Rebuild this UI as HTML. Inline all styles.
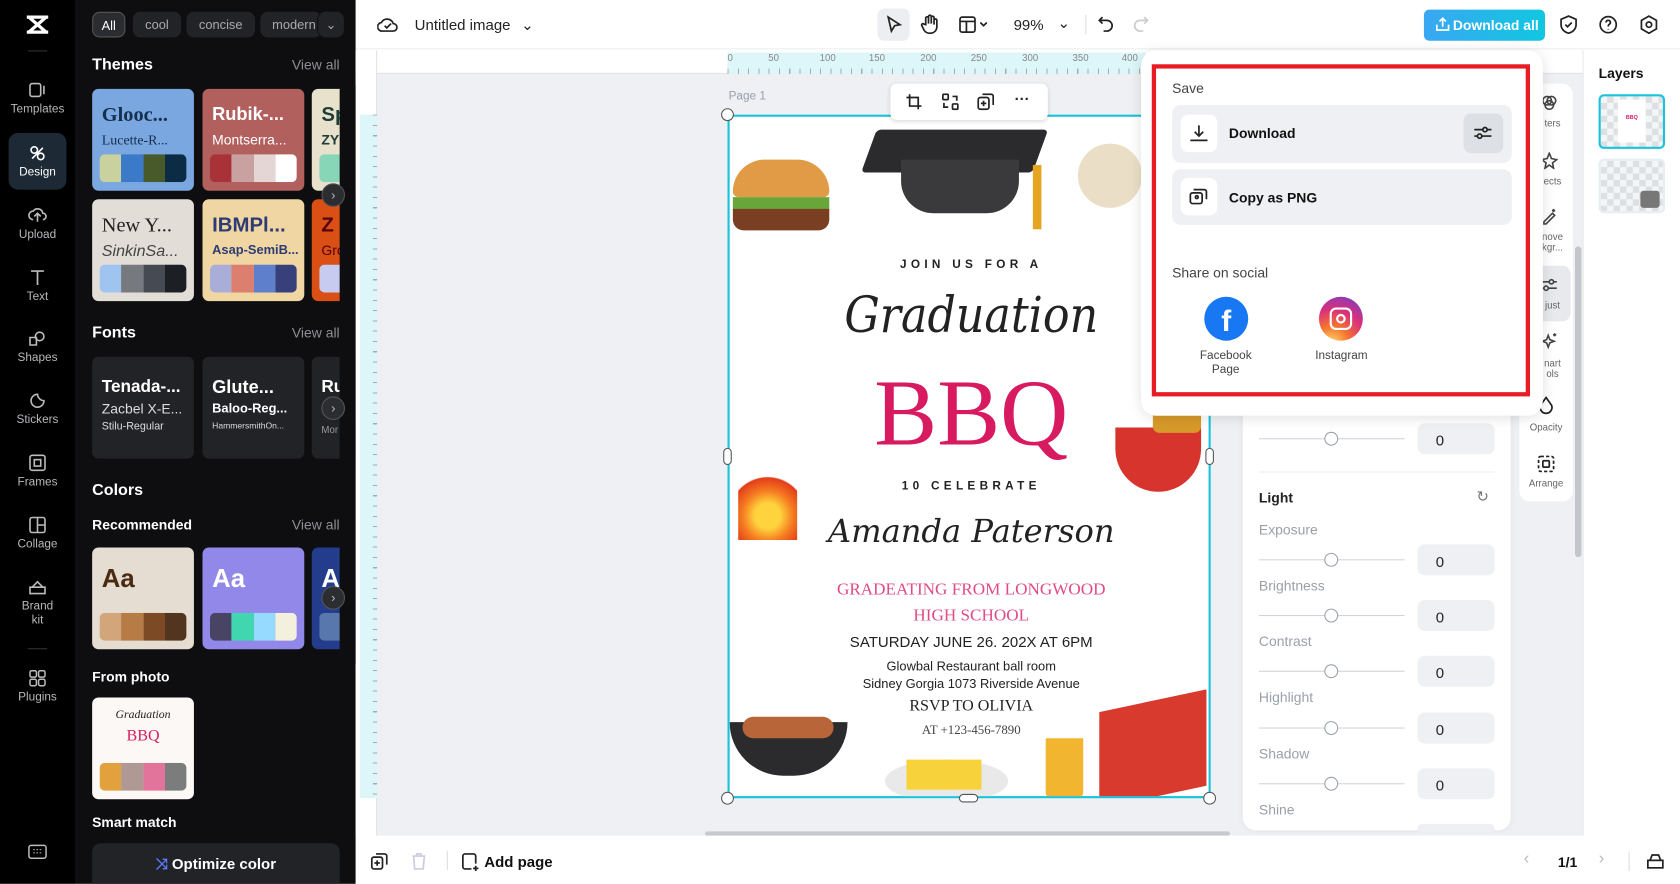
<!DOCTYPE html>
<html><head><meta charset="utf-8"><style>
*{box-sizing:border-box;margin:0;padding:0}
html,body{width:1680px;height:884px;overflow:hidden;background:#fff;font-family:"Liberation Sans","DejaVu Sans",sans-serif}
#w{position:absolute;left:0;top:0;width:1568px;height:825px;transform:scale(1.0714286);transform-origin:0 0;overflow:hidden}
.a{position:absolute}
.nav{left:0;top:0;width:70px;height:825px;background:#000}
.ni{position:absolute;left:0;width:70px;text-align:center;color:#b8b8bc;font-size:11px}
.ni svg{display:block;margin:0 auto 3px}
.pan{left:70px;top:0;width:262px;height:825px;background:#0e0e10;color:#fff;overflow:hidden}
.chip{position:absolute;top:11px;height:24px;border-radius:7px;background:#222327;color:#aaa;font-size:12px;line-height:24px;text-align:center}
.h{position:absolute;font-weight:bold;font-size:15px;color:#fff}
.va{position:absolute;right:15px;font-size:13px;color:#8e8e94}
.card{position:absolute;width:95px;height:95px;border-radius:6px;overflow:hidden}
.sw{position:absolute;left:7px;bottom:8px;width:81px;height:26px;border-radius:5px;overflow:hidden;display:flex}
.sw i{flex:1}
.t1{position:absolute;left:9px;top:14px;font-size:19px;font-weight:bold;white-space:nowrap}
.t2{position:absolute;left:9px;top:40px;font-size:13px;white-space:nowrap}
.fc{background:#222327}
.arr{position:absolute;left:230px;width:22px;height:22px;border-radius:50%;background:#2b2d31;border:1px solid #555;color:#bbb;font-size:12px;text-align:center;line-height:20px;z-index:3}
.top{left:332px;top:0;width:1236px;height:46px;background:#fff;border-bottom:1px solid #eceef1}
.ico{position:absolute;stroke:#222;fill:none;stroke-width:1.6}
.sl{position:absolute;left:15px;width:136px;height:1px;background:#d0d4da}
.sl:after{content:"";position:absolute;left:61px;top:-6px;width:11px;height:11px;border-radius:50%;border:1px solid #9aa0a8;background:#fff}
.inp{position:absolute;left:163px;width:72px;height:29px;border-radius:7px;background:#eef0f3;font-size:14px;color:#222;padding:8px 0 0 17px}
.lab{position:absolute;left:15px;font-size:13px;color:#9aa0a8}
.tl{position:absolute;left:0;width:50px;text-align:center;font-size:9px;color:#666}
.ti{position:absolute;left:17px;stroke:#444;fill:none;stroke-width:1.5}
</style></head><body><div id="w">

<!-- left nav -->
<div class="a nav">
 <svg class="a" style="left:22px;top:12px" width="26" height="22" viewBox="0 0 26 22"><path d="M3 4h20M3 18h20M5 4l16 14M21 4L5 18" stroke="#fff" stroke-width="3" fill="none"/></svg>
 <div class="a" style="left:26px;top:47px;width:18px;height:1px;background:#333"></div>
 <div class="ni" style="top:75px"><svg width="18" height="18" viewBox="0 0 18 18"><rect x="2" y="3" width="10" height="12" rx="2" stroke="#bbb" fill="none" stroke-width="1.5"/><path d="M15 5v8" stroke="#bbb" stroke-width="1.5"/></svg>Templates</div>
 <div class="a" style="left:8px;top:124px;width:54px;height:53px;border-radius:9px;background:#1d2a36"></div>
 <div class="ni" style="top:134px;color:#fff"><svg width="18" height="18" viewBox="0 0 18 18"><circle cx="6" cy="6" r="3" stroke="#fff" fill="none" stroke-width="1.5"/><circle cx="12" cy="12" r="3" stroke="#fff" fill="none" stroke-width="1.5"/><path d="M4 14L14 4" stroke="#fff" stroke-width="1.5"/></svg>Design</div>
 <div class="ni" style="top:192px"><svg width="18" height="18" viewBox="0 0 18 18"><path d="M5 13a4 4 0 0 1 0-8 5 5 0 0 1 9 2 3 3 0 0 1 0 6M9 15V8M6 10l3-3 3 3" stroke="#bbb" fill="none" stroke-width="1.5"/></svg>Upload</div>
 <div class="ni" style="top:250px"><svg width="18" height="18" viewBox="0 0 18 18"><path d="M3 3h12M9 3v13" stroke="#bbb" stroke-width="1.6"/></svg>Text</div>
 <div class="ni" style="top:307px"><svg width="18" height="18" viewBox="0 0 18 18"><circle cx="11" cy="7" r="4" stroke="#bbb" fill="none" stroke-width="1.5"/><path d="M2 8h6v7H2z" stroke="#bbb" fill="none" stroke-width="1.5"/></svg>Shapes</div>
 <div class="ni" style="top:365px"><svg width="18" height="18" viewBox="0 0 18 18"><path d="M15 9A6 6 0 1 1 9 3c0 3 3 6 6 6z" stroke="#bbb" fill="none" stroke-width="1.5"/></svg>Stickers</div>
 <div class="ni" style="top:423px"><svg width="18" height="18" viewBox="0 0 18 18"><rect x="2" y="2" width="14" height="14" rx="2" stroke="#bbb" fill="none" stroke-width="1.5"/><rect x="6" y="6" width="6" height="6" stroke="#bbb" fill="none" stroke-width="1.5"/></svg>Frames</div>
 <div class="ni" style="top:481px"><svg width="18" height="18" viewBox="0 0 18 18"><rect x="2" y="2" width="14" height="14" rx="2" stroke="#bbb" fill="none" stroke-width="1.5"/><path d="M9 2v14M9 9h7" stroke="#bbb" stroke-width="1.5"/></svg>Collage</div>
 <div class="ni" style="top:539px;line-height:13px"><svg width="18" height="18" viewBox="0 0 18 18"><path d="M2 9h14v6H2zM4 9l5-5 5 5" stroke="#bbb" fill="none" stroke-width="1.5"/></svg>Brand<br>kit</div>
 <div class="a" style="left:26px;top:605px;width:18px;height:1px;background:#333"></div>
 <div class="ni" style="top:624px"><svg width="18" height="18" viewBox="0 0 18 18"><rect x="2" y="2" width="6" height="6" rx="1.5" stroke="#bbb" fill="none" stroke-width="1.4"/><rect x="10" y="2" width="6" height="6" rx="1.5" stroke="#bbb" fill="none" stroke-width="1.4"/><rect x="2" y="10" width="6" height="6" rx="1.5" stroke="#bbb" fill="none" stroke-width="1.4"/><rect x="10" y="10" width="6" height="6" rx="1.5" stroke="#bbb" fill="none" stroke-width="1.4"/></svg>Plugins</div>
 <svg class="a" style="left:26px;top:788px" width="18" height="14" viewBox="0 0 18 14"><rect x="1" y="1" width="16" height="12" rx="2" stroke="#bbb" fill="none" stroke-width="1.4"/><path d="M5 5h8M5 8h8" stroke="#bbb" stroke-dasharray="1.5 1.5"/></svg>
</div>

<!-- panel -->
<div class="a pan">
 <div class="chip" style="left:16px;width:31px;background:#2a2c30;border:1px solid #555;color:#fff">All</div>
 <div class="chip" style="left:54px;width:45px">cool</div>
 <div class="chip" style="left:104px;width:64px">concise</div>
 <div class="chip" style="left:173px;width:57px;text-align:left;padding-left:11px;overflow:hidden">modern</div>
 <div class="chip" style="left:226px;width:21px;background:#0e0e10"></div>
 <div class="chip" style="left:227px;width:24px">⌄</div>
 <div class="h" style="left:16px;top:52px">Themes</div><div class="va" style="top:53px">View all</div>
 <div class="card" style="left:16px;top:83px;background:#7aa7e0"><div class="t1" style="font-family:'Liberation Serif',serif;color:#15304e">Glooc...</div><div class="t2" style="font-family:'Liberation Serif',serif;color:#15304e">Lucette-R...</div><div class="sw"><i style="background:#c9d29f"></i><i style="background:#3a7ac9"></i><i style="background:#48592a"></i><i style="background:#0c2b45"></i></div></div>
 <div class="card" style="left:119px;top:83px;background:#b2605e"><div class="t1" style="color:#fff;font-size:17px">Rubik-...</div><div class="t2" style="color:#fff">Montserra...</div><div class="sw"><i style="background:#a83237"></i><i style="background:#c9a1a1"></i><i style="background:#e4d6d4"></i><i style="background:#fff"></i></div></div>
 <div class="card" style="left:221px;top:83px;background:#e8e2cc"><div class="t1" style="color:#1d3d36">Sp</div><div class="t2" style="color:#1d3d36;font-weight:bold">ZY</div><div class="sw"><i style="background:#86d6b7"></i></div></div>
 <div class="card" style="left:16px;top:186px;background:#e3ddd7"><div class="t1" style="font-family:'Liberation Serif',serif;color:#222;font-weight:normal">New Y...</div><div class="t2" style="color:#444;font-style:italic;font-size:15px">SinkinSa...</div><div class="sw"><i style="background:#a0c4f0"></i><i style="background:#767a7f"></i><i style="background:#464a52"></i><i style="background:#1c1f24"></i></div></div>
 <div class="card" style="left:119px;top:186px;background:#efd6a3"><div class="t1" style="color:#2f3c73">IBMPl...</div><div class="t2" style="color:#2f3c73;font-weight:bold;font-size:12px">Asap-SemiB...</div><div class="sw"><i style="background:#a9aed8"></i><i style="background:#dd7f6f"></i><i style="background:#5e7fcc"></i><i style="background:#38407c"></i></div></div>
 <div class="card" style="left:221px;top:186px;background:#d94f14"><div class="t1" style="color:#501">Z</div><div class="t2" style="color:#501">Gro</div><div class="sw"><i style="background:#c7cbf0"></i></div></div>
 <div class="arr" style="top:171px">›</div>
 <div class="h" style="left:16px;top:302px">Fonts</div><div class="va" style="top:303px">View all</div>
 <div class="card fc" style="left:16px;top:333px"><div class="t1" style="color:#fff;font-size:16px;top:20px">Tenada-...</div><div class="t2" style="color:#ddd;top:41px">Zacbel X-E...</div><div class="t2" style="color:#ddd;top:60px;font-size:10px">Stilu-Regular</div></div>
 <div class="card fc" style="left:119px;top:333px"><div class="t1" style="color:#fff;font-size:17px;top:19px">Glute...</div><div class="t2" style="color:#fff;top:41px;font-weight:bold;font-size:12px">Baloo-Reg...</div><div class="t2" style="color:#ddd;top:60px;font-size:8px">HammersmithOn...</div></div>
 <div class="card fc" style="left:221px;top:333px"><div class="t1" style="color:#fff;font-size:16px;top:20px">Ru</div><div class="t2" style="color:#999;top:63px;font-size:9px">Mor</div></div>
 <div class="arr" style="top:370px">›</div>
 <div class="h" style="left:16px;top:449px">Colors</div>
 <div class="a" style="left:16px;top:482px;font-size:13px;font-weight:bold">Recommended</div><div class="va" style="top:482px">View all</div>
 <div class="card" style="left:16px;top:511px;background:#e5dcd2"><div class="t1" style="color:#4a2b12;font-size:24px;top:16px">Aa</div><div class="sw"><i style="background:#d2a67a"></i><i style="background:#b77c45"></i><i style="background:#7c4a25"></i><i style="background:#53341e"></i></div></div>
 <div class="card" style="left:119px;top:511px;background:#9288e9"><div class="t1" style="color:#fff;font-size:24px;top:16px">Aa</div><div class="sw"><i style="background:#4a4464"></i><i style="background:#3fd6b0"></i><i style="background:#96daff"></i><i style="background:#f4f0de"></i></div></div>
 <div class="card" style="left:221px;top:511px;background:#233c8c"><div class="t1" style="color:#fff;font-size:24px;top:16px">A</div><div class="sw"><i style="background:#5777ad"></i></div></div>
 <div class="arr" style="top:547px">›</div>
 <div class="a" style="left:247px;top:80px;width:15px;height:540px;background:#0e0e10;z-index:2"></div>
 <div class="a" style="left:16px;top:624px;font-size:13px;font-weight:bold">From photo</div>
 <div class="card" style="left:16px;top:651px;background:#fbf8f6"><div class="a" style="left:0;width:95px;top:10px;text-align:center;font-family:'Liberation Serif',serif;font-style:italic;font-size:11px;color:#222">Graduation</div><div class="a" style="left:0;width:95px;top:28px;text-align:center;font-family:'Liberation Serif',serif;font-size:15px;color:#d51e63">BBQ</div><div class="sw"><i style="background:#e3a13e"></i><i style="background:#b09995"></i><i style="background:#e2739a"></i><i style="background:#7b7d7c"></i></div></div>
 <div class="a" style="left:16px;top:760px;font-size:13px;font-weight:bold">Smart match</div>
 <div class="a" style="left:16px;top:787px;width:231px;height:45px;border-radius:8px;background:#222327;text-align:center;line-height:38px;font-size:14px;font-weight:bold"><span style="color:#5b7cff">⤨</span> Optimize color</div>
</div>
<div class="a" style="left:332px;top:390px;width:6px;height:46px;background:#222;border-radius:0 6px 6px 0"></div>

<!-- top bar -->
<div class="a top">
 <svg class="ico" style="left:20px;top:14px" width="20" height="18" viewBox="0 0 20 18"><path d="M5 15a4 4 0 0 1-1-8 6 6 0 0 1 11 1 3.5 3.5 0 0 1 0 7zM7 10l2 2 4-4"/></svg>
 <div class="a" style="left:55px;top:15px;font-size:14px;color:#222">Untitled image <span style="margin-left:6px">⌄</span></div>
 <div class="a" style="left:487px;top:8px;width:30px;height:30px;border-radius:6px;background:#eceef1"></div>
 <svg class="ico" style="left:494px;top:14px" width="16" height="18" viewBox="0 0 16 18"><path d="M3 2l11 7-5 1-3 5z"/></svg>
 <svg class="ico" style="left:527px;top:13px" width="18" height="19" viewBox="0 0 18 19"><path d="M5 10V4a1.3 1.3 0 0 1 2.6 0v5V2.5a1.3 1.3 0 0 1 2.6 0V9V3.5a1.3 1.3 0 0 1 2.6 0V10V6a1.3 1.3 0 0 1 2.6 0v6a6 6 0 0 1-6 6h-1a6 6 0 0 1-5-3l-2-4a1.2 1.2 0 0 1 2-1.4z"/></svg>
 <svg class="ico" style="left:563px;top:14px" width="28" height="18" viewBox="0 0 28 18"><rect x="1" y="2" width="14" height="14" rx="2"/><path d="M1 6h14M7 6v10M20 7l3 3 3-3"/></svg>
 <div class="a" style="left:614px;top:15px;font-size:14px;color:#222">99%</div>
 <div class="a" style="left:655px;top:13px;font-size:14px;color:#222">⌄</div>
 <div class="a" style="left:681px;top:14px;width:1px;height:18px;background:#ddd"></div>
 <svg class="ico" style="left:692px;top:14px" width="16" height="16" viewBox="0 0 16 16"><path d="M5 2L2 5l3 3M2 5h7a5 5 0 0 1 0 10H6"/></svg>
 <svg class="ico" style="left:725px;top:14px;stroke:#ccc" width="16" height="16" viewBox="0 0 16 16"><path d="M11 2l3 3-3 3M14 5H7a5 5 0 0 0 0 10h3"/></svg>
 <div class="a" style="left:997px;top:9px;width:113px;height:29px;border-radius:5px;background:linear-gradient(90deg,#3aa7f2,#10c7e0);color:#fff;font-size:13px;font-weight:bold;line-height:29px;padding-left:27px">Download all</div>
 <svg class="ico" style="left:1008px;top:16px;stroke:#fff" width="13" height="13" viewBox="0 0 13 13"><path d="M1 7v5h11V7M6.5 9V1M3.5 4l3-3 3 3"/></svg>
 <svg class="ico" style="left:1123px;top:14px" width="18" height="18" viewBox="0 0 18 18"><path d="M9 1l7 3v5c0 4-3 7-7 8-4-1-7-4-7-8V4zM6 9l2 2 4-4"/></svg>
 <svg class="ico" style="left:1160px;top:14px" width="18" height="18" viewBox="0 0 18 18"><circle cx="9" cy="9" r="7.5"/><path d="M7 7a2 2 0 1 1 3 1.7c-.8.5-1 1-1 2M9 13v.5"/></svg>
 <svg class="ico" style="left:1198px;top:14px" width="18" height="18" viewBox="0 0 18 18"><path d="M9 1l7 4v8l-7 4-7-4V5z"/><circle cx="9" cy="9" r="2.5"/></svg>
</div>

<!-- rulers & canvas -->
<div class="a" style="left:332px;top:47px;width:1146px;height:733px;background:#eef0f3"></div>
<div class="a" style="left:332px;top:47px;width:1146px;height:22px;background:#fff;border-bottom:1px solid #e0e3e7"></div>
<div class="a" style="left:332px;top:47px;width:20px;height:733px;background:#fff;border-right:1px solid #e0e3e7"></div>
<div class="a" style="left:679px;top:49px;width:390px;height:20px;background:#dcf6f9;font-size:9px;color:#888">
 <span class="a" style="left:0">0</span><span class="a" style="left:38px">50</span><span class="a" style="left:86px">100</span><span class="a" style="left:132px">150</span><span class="a" style="left:180px">200</span><span class="a" style="left:227px">250</span><span class="a" style="left:275px">300</span><span class="a" style="left:322px">350</span><span class="a" style="left:368px">400</span>
 <div class="a" style="left:0;bottom:0;width:390px;height:5px;background:repeating-linear-gradient(90deg,#aaa 0 1px,transparent 1px 9.6px)"></div>
</div>
<div class="a" style="left:336px;top:107px;width:16px;height:638px;background:#dcf6f9;background-image:repeating-linear-gradient(180deg,#aaa 0 1px,transparent 1px 9.6px);background-size:4px 100%;background-repeat:no-repeat;background-position:right"></div>
<div class="a" style="left:680px;top:84px;font-size:11px;color:#9aa0a8">Page 1</div>

<!-- poster -->
<div class="a" style="left:679px;top:107px;width:451px;height:638px;background:#fff;border:2px solid #19c3d9;overflow:hidden;text-align:center;color:#222">
 <div class="a" style="left:130px;top:12px;width:160px;height:40px;background:#2b2b2e;transform:skewX(-20deg);border-radius:4px"></div>
 <div class="a" style="left:160px;top:40px;width:110px;height:50px;background:#3a3a3d;border-radius:0 0 30px 30px"></div>
 <div class="a" style="left:283px;top:45px;width:8px;height:60px;background:#e5a521"></div>
 <div class="a" style="left:3px;top:40px;width:90px;height:35px;background:#e19b46;border-radius:45px 45px 8px 8px"></div>
 <div class="a" style="left:3px;top:75px;width:90px;height:12px;background:#68a63a"></div>
 <div class="a" style="left:3px;top:86px;width:90px;height:20px;background:#7a3f22;border-radius:0 0 10px 10px"></div>
 <div class="a" style="left:325px;top:25px;width:60px;height:60px;background:#eadfc6;border-radius:30px;transform:rotate(-30deg)"></div>
 <div class="a" style="left:0;top:132px;width:451px;font-size:11px;font-weight:bold;letter-spacing:4px">JOIN US FOR A</div>
 <div class="a" style="left:0;top:158px;width:451px;font-family:'DejaVu Serif',serif;font-style:italic;font-size:46px;transform:scaleX(.9)">Graduation</div>
 <div class="a" style="left:0;top:228px;width:451px;font-family:'Liberation Serif',serif;font-size:88px;color:#d81b61;line-height:100px">BBQ</div>
 <div class="a" style="left:0;top:339px;width:451px;font-size:11px;font-weight:bold;letter-spacing:4px">10 CELEBRATE</div>
 <div class="a" style="left:0;top:370px;width:451px;font-family:'DejaVu Serif',serif;font-style:italic;font-size:30px">Amanda Paterson</div>
 <div class="a" style="left:0;top:430px;width:451px;font-family:'Liberation Serif',serif;font-size:16px;color:#e04b86;line-height:24px">GRADEATING FROM LONGWOOD<br>HIGH SCHOOL</div>
 <div class="a" style="left:0;top:482px;width:451px;font-size:14px">SATURDAY JUNE 26. 202X AT 6PM</div>
 <div class="a" style="left:0;top:505px;width:451px;font-size:12px;line-height:16px">Glowbal Restaurant ball room<br>Sidney Gorgia 1073 Riverside Avenue</div>
 <div class="a" style="left:0;top:542px;width:451px;font-family:'Liberation Serif',serif;font-size:15px">RSVP TO OLIVIA</div>
 <div class="a" style="left:0;top:565px;width:451px;font-family:'Liberation Serif',serif;font-size:12px;color:#444">AT +123-456-7890</div>
 <div class="a" style="left:8px;top:320px;width:55px;height:75px;background:radial-gradient(circle at 50% 70%,#ffd33d 0 20%,#f57b20 40%,#e33d1a 60%,transparent 62%)"></div>
 <div class="a" style="left:360px;top:290px;width:80px;height:60px;background:#d6342c;border-radius:0 0 40px 40px"></div>
 <div class="a" style="left:395px;top:255px;width:45px;height:40px;background:#d79a2a;border-radius:6px"></div>
 <div class="a" style="left:0;top:565px;width:110px;height:50px;background:#2b2b2e;border-radius:0 0 50px 50px"></div>
 <div class="a" style="left:12px;top:560px;width:85px;height:20px;background:#b8653a;border-radius:10px"></div>
 <div class="a" style="left:145px;top:600px;width:115px;height:40px;background:#e9e9e9;border-radius:50%"></div>
 <div class="a" style="left:165px;top:600px;width:70px;height:28px;background:#f7d23a"></div>
 <div class="a" style="left:295px;top:580px;width:35px;height:55px;background:#f2b530;border-radius:0 0 4px 4px"></div>
 <div class="a" style="left:345px;top:545px;width:100px;height:90px;background:#d83a2e;transform:skewY(-12deg)"></div>
</div>
<div class="a" style="left:673px;top:101px;width:12px;height:12px;border-radius:50%;background:#fff;border:1px solid #555"></div>
<div class="a" style="left:673px;top:739px;width:12px;height:12px;border-radius:50%;background:#fff;border:1px solid #555"></div>
<div class="a" style="left:1123px;top:739px;width:12px;height:12px;border-radius:50%;background:#fff;border:1px solid #555"></div>
<div class="a" style="left:675px;top:418px;width:8px;height:16px;border-radius:4px;background:#fff;border:1px solid #555"></div>
<div class="a" style="left:1125px;top:418px;width:8px;height:16px;border-radius:4px;background:#fff;border:1px solid #555"></div>
<div class="a" style="left:895px;top:741px;width:18px;height:8px;border-radius:4px;background:#fff;border:1px solid #555"></div>
<div class="a" style="left:831px;top:78px;width:147px;height:34px;border-radius:6px;background:#fff;box-shadow:0 1px 4px rgba(0,0,0,.15)"></div>
<svg class="ico" style="left:845px;top:87px" width="16" height="16" viewBox="0 0 16 16"><path d="M4 1v11h11M1 4h11v11"/></svg>
<svg class="ico" style="left:879px;top:87px" width="16" height="16" viewBox="0 0 16 16"><rect x="1" y="1" width="5" height="5" rx="1"/><rect x="10" y="10" width="5" height="5" rx="1"/><path d="M10 3h4v4M6 13H2V9"/></svg>
<svg class="ico" style="left:912px;top:87px" width="16" height="16" viewBox="0 0 16 16"><rect x="1" y="4" width="10" height="11" rx="2"/><path d="M5 1h8a2 2 0 0 1 2 2v8M6 7v5M3.5 9.5h5"/></svg>
<div class="a" style="left:947px;top:84px;font-size:14px;font-weight:bold;color:#222">···</div>
<div class="a" style="left:658px;top:776px;width:490px;height:4px;border-radius:2px;background:#c6cacf"></div>

<!-- adjust panel -->
<div class="a" style="left:1160px;top:375px;width:250px;height:400px;background:#fff;border-radius:0 0 12px 12px;box-shadow:0 0 6px rgba(0,0,0,.06)">
 <div class="sl" style="top:34px"></div><div class="inp" style="top:20px">0</div>
 <div class="a" style="left:15px;top:65px;width:220px;height:1px;background:#eceef1"></div>
 <div class="a" style="left:15px;top:82px;font-size:13px;font-weight:bold;color:#222">Light</div>
 <div class="a" style="left:218px;top:80px;font-size:14px;color:#777">↻</div>
 <div class="lab" style="top:112px">Exposure</div><div class="sl" style="top:147px"></div><div class="inp" style="top:133px">0</div>
 <div class="lab" style="top:164px">Brightness</div><div class="sl" style="top:199px"></div><div class="inp" style="top:185px">0</div>
 <div class="lab" style="top:216px">Contrast</div><div class="sl" style="top:251px"></div><div class="inp" style="top:237px">0</div>
 <div class="lab" style="top:268px">Highlight</div><div class="sl" style="top:304px"></div><div class="inp" style="top:290px">0</div>
 <div class="lab" style="top:321px">Shadow</div><div class="sl" style="top:356px"></div><div class="inp" style="top:342px">0</div>
 <div class="lab" style="top:373px">Shine</div><div class="inp" style="top:394px;height:6px"></div>
</div>

<!-- tools strip -->
<div class="a" style="left:1418px;top:78px;width:50px;height:390px;background:#fff;border-radius:10px">
 <div class="a" style="left:0;top:170px;width:48px;height:52px;border-radius:8px;background:#e7e9ec"></div>
 <svg class="ti" style="top:10px;left:20px" width="16" height="16" viewBox="0 0 16 16"><circle cx="6" cy="6" r="4"/><circle cx="10" cy="6" r="4"/><circle cx="8" cy="10" r="4"/></svg>
 <div class="tl" style="top:32px;left:6px">ters</div>
 <svg class="ti" style="top:64px;left:20px" width="16" height="16" viewBox="0 0 16 16"><path d="M8 1l2 5 5 1-4 3 1 5-4-3-4 3 1-5-4-3 5-1z"/></svg>
 <div class="tl" style="top:86px;left:6px">ects</div>
 <svg class="ti" style="top:116px;left:20px" width="16" height="16" viewBox="0 0 16 16"><path d="M3 13l8-8 2 2-8 8H3zM12 1v3M10.5 2.5h3"/></svg>
 <div class="tl" style="top:138px;left:6px;line-height:10px">nove<br>kgr...</div>
 <svg class="ti" style="top:180px;left:20px" width="16" height="16" viewBox="0 0 16 16"><path d="M1 5h14M1 11h14"/><circle cx="10" cy="5" r="2" fill="#e7e9ec"/><circle cx="5" cy="11" r="2" fill="#e7e9ec"/></svg>
 <div class="tl" style="top:202px;left:6px">just</div>
 <svg class="ti" style="top:232px;left:20px" width="16" height="16" viewBox="0 0 16 16"><path d="M7 3l1.5 4 4 1.5-4 1.5L7 14l-1.5-4-4-1.5 4-1.5zM13 1v3M11.5 2.5h3"/></svg>
 <div class="tl" style="top:256px;left:6px;line-height:10px">nart<br>ols</div>
 <svg class="ico" style="left:17px;top:292px" width="16" height="18" viewBox="0 0 16 18"><path d="M8 1l5 7a5.5 5.5 0 1 1-10 0z"/></svg>
 <div class="tl" style="top:316px">Opacity</div>
 <svg class="ico" style="left:17px;top:347px" width="16" height="16" viewBox="0 0 16 16"><rect x="1" y="1" width="14" height="14" rx="2" stroke-dasharray="3 2"/><rect x="5" y="5" width="6" height="6" rx="1"/></svg>
 <div class="tl" style="top:368px">Arrange</div>
</div>
<div class="a" style="left:1470px;top:230px;width:6px;height:290px;border-radius:3px;background:#c3c7cc"></div>

<!-- layers -->
<div class="a" style="left:1477px;top:47px;width:1px;height:733px;background:#e6e8eb"></div>
<div class="a" style="left:1492px;top:61px;font-size:13px;font-weight:bold;color:#111">Layers</div>
<div class="a" style="left:1492px;top:88px;width:62px;height:51px;border:2px solid #19c3d9;border-radius:5px;background:repeating-conic-gradient(#dde0e3 0 25%,#f4f5f6 0 50%) 0 0/12px 12px"><div style="margin:3px auto;width:26px;height:40px;background:#fff;font-size:5px;color:#d81b61;text-align:center;padding-top:14px;font-weight:bold">BBQ</div></div>
<div class="a" style="left:1492px;top:148px;width:62px;height:51px;border:2px solid #e6eef2;border-radius:5px;background:repeating-conic-gradient(#dde0e3 0 25%,#f4f5f6 0 50%) 0 0/12px 12px"><div class="a" style="right:3px;bottom:3px;width:18px;height:16px;border-radius:3px;background:#777"></div></div>

<!-- bottom bar -->
<div class="a" style="left:332px;top:780px;width:1236px;height:45px;background:#fff"></div>
<svg class="ico" style="left:346px;top:796px" width="16" height="16" viewBox="0 0 16 16"><rect x="1" y="4" width="10" height="11" rx="2"/><path d="M5 1h8a2 2 0 0 1 2 2v8M6 7v5M3.5 9.5h5"/></svg>
<svg class="ico" style="left:384px;top:796px;stroke:#ccd" width="14" height="16" viewBox="0 0 14 16"><path d="M1 3h12M5 3V1h4v2M2 3l1 12h8l1-12"/></svg>
<div class="a" style="left:417px;top:794px;width:1px;height:18px;background:#ddd"></div>
<svg class="ico" style="left:431px;top:796px" width="16" height="17" viewBox="0 0 16 17"><path d="M9 15H3a2 2 0 0 1-2-2V3a2 2 0 0 1 2-2h8a2 2 0 0 1 2 2v7M13 12v5M10.5 14.5h5"/></svg>
<div class="a" style="left:452px;top:796px;font-size:14px;font-weight:bold;color:#111">Add page</div>
<div class="a" style="left:1422px;top:793px;font-size:16px;color:#bbb">‹</div>
<div class="a" style="left:1454px;top:797px;font-size:13px;font-weight:bold;color:#111">1/1</div>
<div class="a" style="left:1492px;top:793px;font-size:16px;color:#bbb">›</div>
<div class="a" style="left:1520px;top:795px;width:1px;height:18px;background:#ddd"></div>
<svg class="ico" style="left:1537px;top:797px" width="16" height="14" viewBox="0 0 16 14"><path d="M1 6h14v7H1zM3 6l2-5h6l2 5"/></svg>

<!-- popup -->
<div class="a" style="left:1065px;top:47px;width:375px;height:341px;background:#fff;border-radius:14px;box-shadow:0 2px 12px rgba(0,0,0,.12)"></div>
<div class="a" style="left:1075px;top:60px;width:353px;height:310px;border:4px solid #e81c24"></div>
<div class="a" style="left:1094px;top:75px;font-size:13px;color:#444">Save</div>
<div class="a" style="left:1094px;top:98px;width:317px;height:54px;border-radius:8px;background:#eef0f3"></div>
<div class="a" style="left:1102px;top:107px;width:34px;height:35px;border-radius:7px;background:#fff"></div>
<svg class="ico" style="left:1110px;top:116px" width="18" height="17" viewBox="0 0 18 17"><path d="M9 1v10M5 7l4 4 4-4M1 15h16"/></svg>
<div class="a" style="left:1147px;top:117px;font-size:13px;font-weight:bold;color:#111">Download</div>
<div class="a" style="left:1366px;top:106px;width:37px;height:37px;border-radius:7px;background:#dde0e4"></div>
<svg class="ico" style="left:1375px;top:115px" width="18" height="18" viewBox="0 0 18 18"><path d="M1 6h16M1 12h16"/><circle cx="11" cy="6" r="2" fill="#dde0e4"/><circle cx="6" cy="12" r="2" fill="#dde0e4"/></svg>
<div class="a" style="left:1094px;top:158px;width:317px;height:52px;border-radius:8px;background:#eef0f3"></div>
<div class="a" style="left:1102px;top:166px;width:34px;height:35px;border-radius:7px;background:#fff"></div>
<svg class="ico" style="left:1110px;top:175px" width="17" height="16" viewBox="0 0 17 16"><rect x="1" y="5" width="11" height="10" rx="2"/><path d="M4 2h10a2 2 0 0 1 2 2v7"/><circle cx="7" cy="9" r="1.3"/></svg>
<div class="a" style="left:1147px;top:177px;font-size:13px;font-weight:bold;color:#111">Copy as PNG</div>
<div class="a" style="left:1094px;top:247px;font-size:13px;color:#444">Share on social</div>
<div class="a" style="left:1124px;top:277px;width:41px;height:41px;border-radius:50%;background:#1877f2;color:#fff;font-weight:bold;font-size:28px;text-align:center;line-height:46px;overflow:hidden">f</div>
<div class="a" style="left:1104px;top:326px;width:80px;text-align:center;font-size:11px;color:#444;line-height:13px">Facebook<br>Page</div>
<div class="a" style="left:1231px;top:277px;width:41px;height:41px;border-radius:50%;background:radial-gradient(circle at 30% 105%,#fdd56e 0,#f7752e 30%,#d9317a 60%,#8a3ab9 90%)"></div>
<div class="a" style="left:1241px;top:287px;width:21px;height:21px;border:2.5px solid #fff;border-radius:6px"></div>
<div class="a" style="left:1247px;top:293px;width:9px;height:9px;border:2.5px solid #fff;border-radius:50%"></div>
<div class="a" style="left:1212px;top:326px;width:80px;text-align:center;font-size:11px;color:#444">Instagram</div>
</div></body></html>
